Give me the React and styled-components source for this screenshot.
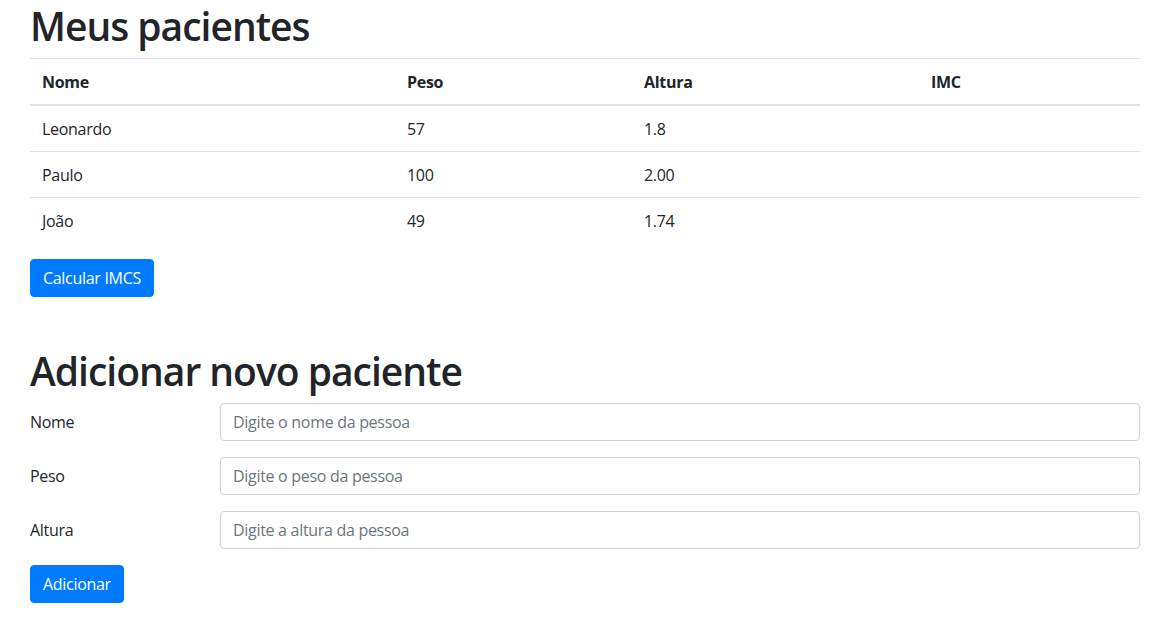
import React from "react";
import styled, { createGlobalStyle } from "styled-components";

const GlobalStyle = createGlobalStyle`
  body {
    margin: 0;
    background: #fff;
    color: #212529;
    font-family: "Open Sans", "Noto Sans", sans-serif;
    font-size: 16px;
    line-height: 1.5;
    letter-spacing: -0.3px;
  }
  * { box-sizing: border-box; }
`;

const Container = styled.div`
  padding: 2px 32px 0 30px;
`;

const Title = styled.h1`
  font-size: 39px;
  font-weight: 600;
  line-height: 48px;
  letter-spacing: -1px;
  margin: ${(p) => (p.$top ? p.$top : "0")} 0 8px;
  color: #212529;
`;

const Table = styled.table`
  width: 100%;
  border-collapse: collapse;
  table-layout: fixed;
  margin-bottom: 16px;
`;

const Th = styled.th`
  text-align: left;
  font-weight: 700;
  padding: 10.5px 12px;
  border-top: 1px solid #dee2e6;
  border-bottom: 2px solid #dee2e6;
  width: ${(p) => p.$w}px;
`;

const Td = styled.td`
  padding: 10.5px 12px;
  border-top: 1px solid #dee2e6;
`;

const Button = styled.button`
  display: inline-block;
  font-family: inherit;
  font-size: 16px;
  letter-spacing: inherit;
  line-height: 24px;
  padding: 6px 12px;
  color: #fff;
  background: #007bff;
  border: 1px solid #007bff;
  border-radius: 4px;
  cursor: pointer;
`;

const FormRow = styled.div`
  display: grid;
  grid-template-columns: 190px 1fr;
  align-items: center;
  margin-bottom: 16px;
`;

const Label = styled.label`
  padding: 7px 0;
`;

const Input = styled.input`
  display: block;
  width: 100%;
  height: 38px;
  padding: 6px 12px;
  font-family: inherit;
  font-size: 16px;
  letter-spacing: inherit;
  color: #495057;
  background: #fff;
  border: 1px solid #ced4da;
  border-radius: 4px;
  &::placeholder { color: #6c757d; }
`;

const pacientes = [
  { nome: "Leonardo", peso: "57", altura: "1.8" },
  { nome: "Paulo", peso: "100", altura: "2.00" },
  { nome: "João", peso: "49", altura: "1.74" },
];

const campos = [
  { label: "Nome", ph: "Digite o nome da pessoa" },
  { label: "Peso", ph: "Digite o peso da pessoa" },
  { label: "Altura", ph: "Digite a altura da pessoa" },
];

export default function App() {
  return (
    <Container>
      <GlobalStyle />
      <Title>Meus pacientes</Title>
      <Table>
        <thead>
          <tr>
            <Th $w={365}>Nome</Th>
            <Th $w={237}>Peso</Th>
            <Th $w={287}>Altura</Th>
            <Th $w={221}>IMC</Th>
          </tr>
        </thead>
        <tbody>
          {pacientes.map((p) => (
            <tr key={p.nome}>
              <Td>{p.nome}</Td>
              <Td>{p.peso}</Td>
              <Td>{p.altura}</Td>
              <Td></Td>
            </tr>
          ))}
        </tbody>
      </Table>
      <Button>Calcular IMCS</Button>
      <Title $top="50px">Adicionar novo paciente</Title>
      <form onSubmit={(e) => e.preventDefault()}>
        {campos.map((c) => (
          <FormRow key={c.label}>
            <Label>{c.label}</Label>
            <Input placeholder={c.ph} />
          </FormRow>
        ))}
        <Button type="submit">Adicionar</Button>
      </form>
    </Container>
  );
}
